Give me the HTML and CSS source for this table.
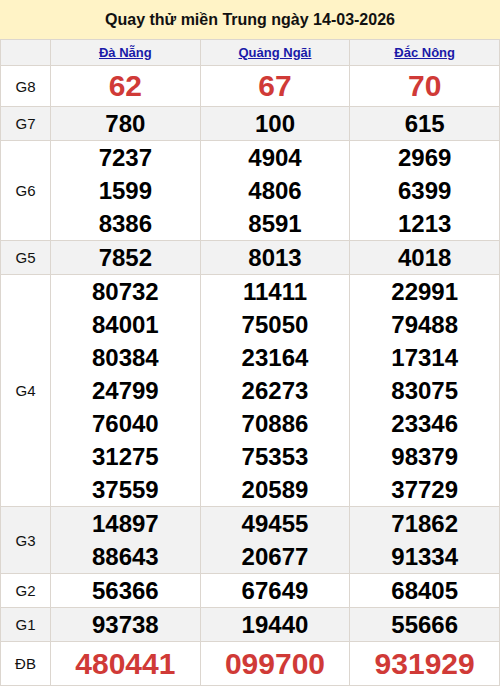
FILE: index.html
```html
<!DOCTYPE html>
<html lang="vi">
<head>
<meta charset="utf-8">
<link rel="stylesheet" href="styles.css">
</head>
<body>
<div class="title">Quay thử miền Trung ngày 14-03-2026</div>
<table class="kq">
  <colgroup><col class="c-label"><col class="c-prov"><col class="c-prov"><col class="c-prov"></colgroup>
  <tr class="head"><th></th><th><a href="#">Đà Nẵng</a></th><th><a href="#">Quảng Ngãi</a></th><th><a href="#">Đắc Nông</a></th></tr>
  <tr class="g8"><td class="lbl">G8</td><td class="red">62</td><td class="red">67</td><td class="red">70</td></tr>
  <tr class="alt"><td class="lbl">G7</td><td>780</td><td>100</td><td>615</td></tr>
  <tr><td class="lbl">G6</td><td>7237<br>1599<br>8386</td><td>4904<br>4806<br>8591</td><td>2969<br>6399<br>1213</td></tr>
  <tr class="alt"><td class="lbl">G5</td><td>7852</td><td>8013</td><td>4018</td></tr>
  <tr><td class="lbl">G4</td><td>80732<br>84001<br>80384<br>24799<br>76040<br>31275<br>37559</td><td>11411<br>75050<br>23164<br>26273<br>70886<br>75353<br>20589</td><td>22991<br>79488<br>17314<br>83075<br>23346<br>98379<br>37729</td></tr>
  <tr class="alt"><td class="lbl">G3</td><td>14897<br>88643</td><td>49455<br>20677</td><td>71862<br>91334</td></tr>
  <tr><td class="lbl">G2</td><td>56366</td><td>67649</td><td>68405</td></tr>
  <tr class="alt"><td class="lbl">G1</td><td>93738</td><td>19440</td><td>55666</td></tr>
  <tr class="db"><td class="lbl">ĐB</td><td class="red">480441</td><td class="red">099700</td><td class="red">931929</td></tr>
</table>
</body>
</html>
```
FILE: styles.css
```css
html, body { margin: 0; padding: 0; background: #fff; }
body { font-family: "Liberation Sans", Arial, sans-serif; color: #000; width: 500px; }
.title {
  background: #fff3c6;
  height: 39px;
  line-height: 39px;
  text-align: center;
  font-weight: bold;
  font-size: 16px;
  color: #111;
}
.kq {
  width: 500px;
  border-collapse: collapse;
  table-layout: fixed;
}
.c-label { width: 50px; }
.kq td, .kq th {
  border: 1px solid #dcd6cf;
  padding: 0;
  text-align: center;
  vertical-align: middle;
}
.kq td {
  font-weight: bold;
  font-size: 24px;
  line-height: 33px;
}
.head th { background: #f2f2f2; height: 25px; font-size: 13px; line-height: 25px; }
.head a { color: #1a1aa8; text-decoration: underline; font-weight: bold; }
.alt td { background: #f2f2f2; }
.kq td.lbl { font-weight: normal; font-size: 15px; color: #111; }
.red { color: #d03a37; }
.g8 td.red { font-size: 30px; line-height: 40px; }
.db td.red { font-size: 30px; line-height: 43px; }
```
